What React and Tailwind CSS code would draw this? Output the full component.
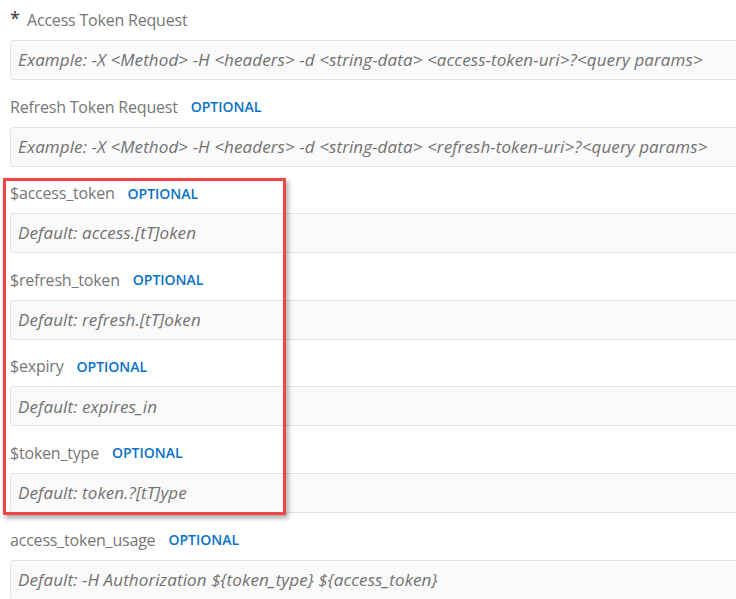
import React from 'react';

const fields = [
  { label: 'Access Token Request', required: true, placeholder: 'Example: -X <Method> -H <headers> -d <string-data> <access-token-uri>?<query params>' },
  { label: 'Refresh Token Request', optional: true, placeholder: 'Example: -X <Method> -H <headers> -d <string-data> <refresh-token-uri>?<query params>' },
  { label: '$access_token', optional: true, placeholder: 'Default: access.[tT]oken' },
  { label: '$refresh_token', optional: true, placeholder: 'Default: refresh.[tT]oken' },
  { label: '$expiry', optional: true, placeholder: 'Default: expires_in' },
  { label: '$token_type', optional: true, placeholder: 'Default: token.?[tT]ype' },
  { label: 'access_token_usage', optional: true, placeholder: 'Default: -H Authorization ${token_type} ${access_token}' },
];

const Field = ({ label, required, optional, placeholder }) => (
  <div className="mb-[16.6px]">
    <div className="flex items-center h-5 mb-[10px] pl-[10px]">
      {required && <span className="text-[#333] text-[18px] w-[17px] -mt-1">*</span>}
      <span className="text-[16px] tracking-[-0.2px] text-[#767676]">{label}</span>
      {optional && (
        <span className="ml-[13px] text-[14px] font-semibold text-[#0a72c6]">OPTIONAL</span>
      )}
    </div>
    <div className="ml-[10px] w-[760px] h-10 border border-[#e3e3e3] rounded-l-[3px] bg-[#fafafa] flex items-center pl-[7px]">
      <span className="italic text-[17px] tracking-[0.1px] text-[#717171] whitespace-nowrap">{placeholder}</span>
    </div>
  </div>
);

export default function App() {
  return (
    <div className="relative w-[736px] h-[599px] overflow-hidden bg-white pt-[10px]" style={{ fontFamily: '"Open Sans", "Noto Sans", sans-serif' }}>
      {fields.map((f) => (
        <Field key={f.label} {...f} />
      ))}
      <div className="absolute left-[3px] top-[178px] w-[283px] h-[337px] border-[3px] border-[#f04646] shadow-[2px_3px_5px_rgba(0,0,0,0.35)] pointer-events-none" />
    </div>
  );
}
